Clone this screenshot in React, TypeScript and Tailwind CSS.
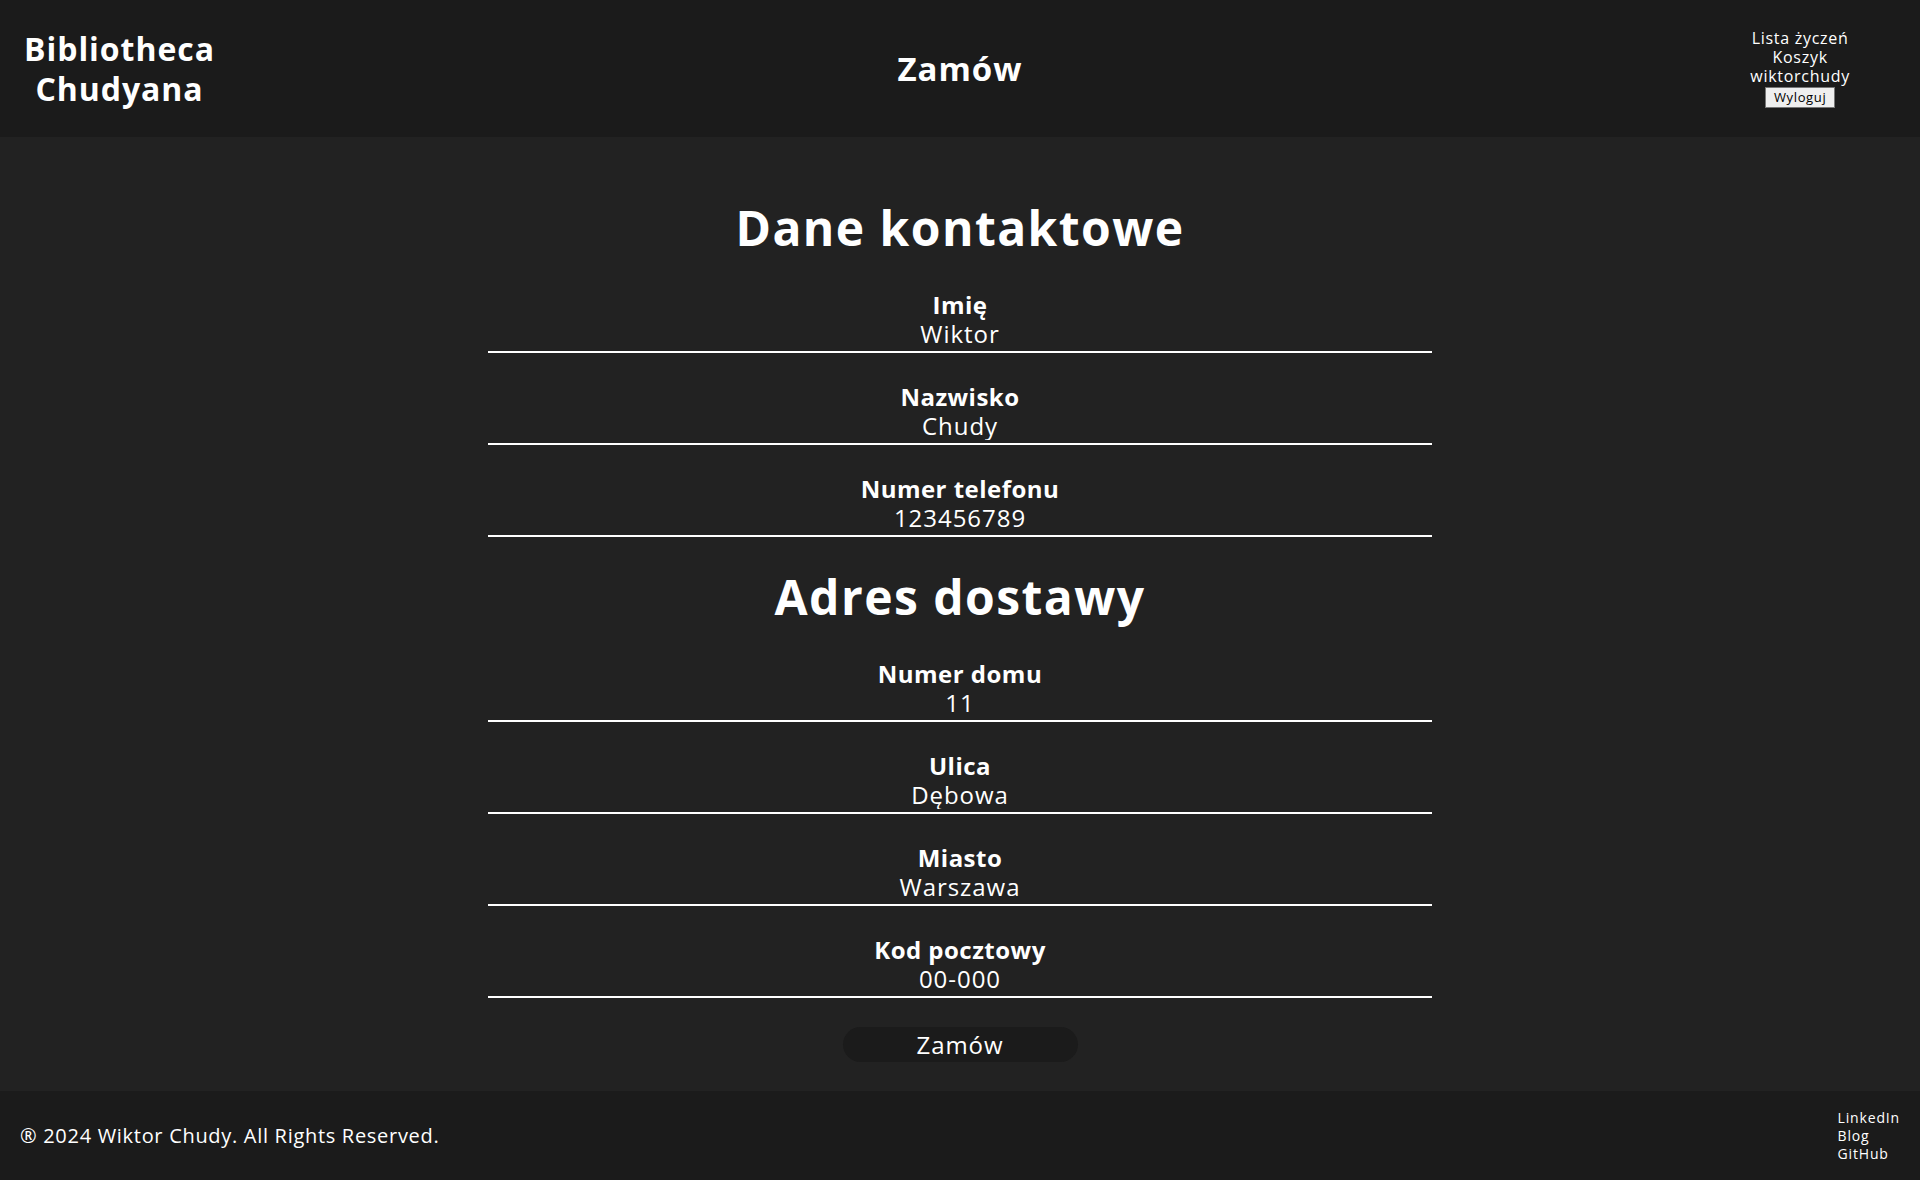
const font = { fontFamily: '"Open Sans", "Noto Sans", sans-serif' }

const contact = [
  { label: 'Imię', value: 'Wiktor' },
  { label: 'Nazwisko', value: 'Chudy' },
  { label: 'Numer telefonu', value: '123456789' },
]

const address = [
  { label: 'Numer domu', value: '11' },
  { label: 'Ulica', value: 'Dębowa' },
  { label: 'Miasto', value: 'Warszawa' },
  { label: 'Kod pocztowy', value: '00-000' },
]

function Field({ label, value }: { label: string; value: string }) {
  return (
    <div className="flex flex-col items-center pt-[29px]">
      <label className="text-[24px] font-bold leading-[29px] tracking-[0.02em] text-white">{label}</label>
      <input
        readOnly
        value={value}
        className="w-[944px] border-b-2 border-white bg-transparent pb-[3px] text-center text-[24px] leading-[29px] tracking-[0.04em] text-white outline-none"
        style={font}
      />
    </div>
  )
}

export default function App() {
  return (
    <div className="flex min-h-screen flex-col bg-[#222222] text-white" style={font}>
      <header className="grid h-[137px] grid-cols-[1fr_auto_1fr] items-center bg-[#1b1b1b] px-[24px]">
        <h1 className="justify-self-start text-center text-[32px] font-bold leading-[40px] tracking-[0.03em]">
          Bibliotheca
          <br />
          Chudyana
        </h1>
        <h2 className="text-[33px] font-bold tracking-[0.03em]">Zamów</h2>
        <nav className="mr-[46px] flex flex-col items-center justify-self-end text-[16px] leading-[19px] tracking-[0.045em]">
          <a>Lista życzeń</a>
          <a>Koszyk</a>
          <a>wiktorchudy</a>
          <button className="mt-[1px] border border-[#767676] bg-[#efefef] px-[8px] text-[13px] leading-[19px] tracking-[0.05em] text-black">
            Wyloguj
          </button>
        </nav>
      </header>

      <main className="flex flex-1 flex-col items-center pt-[62px] pb-[28px]">
        <h2 className="mb-[4px] text-[48px] font-bold leading-[58px] tracking-[0.03em]">Dane kontaktowe</h2>
        {contact.map((f) => (
          <Field key={f.label} {...f} />
        ))}
        <h2 className="mt-[31px] mb-[4px] text-[48px] font-bold leading-[58px] tracking-[0.03em]">Adres dostawy</h2>
        {address.map((f) => (
          <Field key={f.label} {...f} />
        ))}
        <button className="mt-[29px] h-[35px] w-[235px] rounded-full bg-[#1b1b1b] text-[24px] tracking-[0.04em] text-white">
          Zamów
        </button>
      </main>

      <footer className="flex h-[89px] items-center justify-between bg-[#1b1b1b] px-[20px]">
        <p className="text-[20px] tracking-[0.035em]">® 2024 Wiktor Chudy. All Rights Reserved.</p>
        <div className="flex flex-col text-[14px] leading-[18px] tracking-[0.06em]">
          <a>LinkedIn</a>
          <a>Blog</a>
          <a>GitHub</a>
        </div>
      </footer>
    </div>
  )
}
